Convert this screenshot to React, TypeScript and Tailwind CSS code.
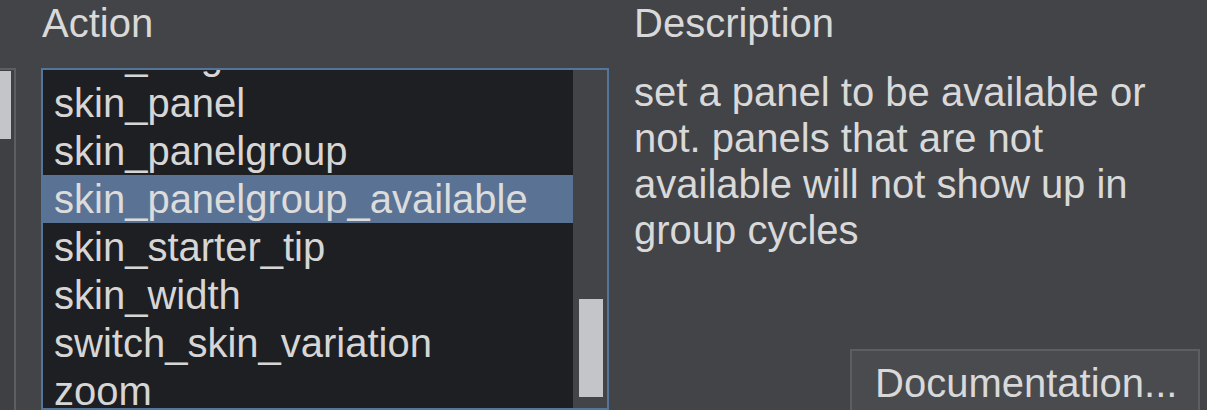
const ACTIONS = [
  "skin_height",
  "skin_panel",
  "skin_panelgroup",
  "skin_panelgroup_available",
  "skin_starter_tip",
  "skin_width",
  "switch_skin_variation",
  "zoom",
];

const SELECTED = "skin_panelgroup_available";

export default function App() {
  return (
    <div className="flex h-[410px] w-[1207px] overflow-hidden bg-[#434448] font-['Liberation_Sans',Arial,sans-serif] text-[40px] text-[#d9d9d9]">
      {/* cut-off list on the left, only its scrollbar shows */}
      <div className="mr-[25px] w-[16px] shrink-0 pt-[68px]">
        <div className="h-full border-r-2 border-t-2 border-[#5d5e62] bg-[#3f4044] pt-px">
          <div className="h-[68px] w-[11px] bg-[#c4c5c9]" />
        </div>
      </div>

      <div className="flex w-[568px] shrink-0 flex-col">
        <div className="h-[68px] shrink-0 pl-px leading-[46px]">Action</div>
        <div className="flex flex-1 overflow-hidden border-2 border-[#56759b] bg-[#1e1f22]">
          <div className="flex-1 overflow-hidden">
            <div className="-mt-[39px]">
              {ACTIONS.map((action) => (
                <div
                  key={action}
                  className={`h-[48px] pl-[11px] leading-[48px] whitespace-nowrap ${
                    action === SELECTED ? "bg-[#5a7394] text-[#dcdcdc]" : "text-[#d6d6d6]"
                  }`}
                >
                  {action}
                </div>
              ))}
            </div>
          </div>
          <div className="w-[34px] shrink-0 bg-[#434448] pl-[6px] pt-[229px]">
            <div className="h-[98px] w-[24px] bg-[#c4c5c9]" />
          </div>
        </div>
      </div>

      <div className="ml-[25px] flex flex-1 flex-col">
        <div className="h-[68px] shrink-0 leading-[46px]">Description</div>
        <div className="h-[281px] w-[566px] shrink-0 pt-[1px] leading-[46px]">
          set a panel to be available or not. panels that are not available will not show up in group
          cycles
        </div>
        <button
          type="button"
          className="mr-[7px] flex h-[80px] w-[350px] shrink-0 items-start self-end border-2 border-[#5d5e62] bg-[#4a4b4f] pl-[23px] pt-[9px] text-left leading-[46px] text-[#d9d9d9]"
        >
          Documentation...
        </button>
      </div>
    </div>
  );
}
